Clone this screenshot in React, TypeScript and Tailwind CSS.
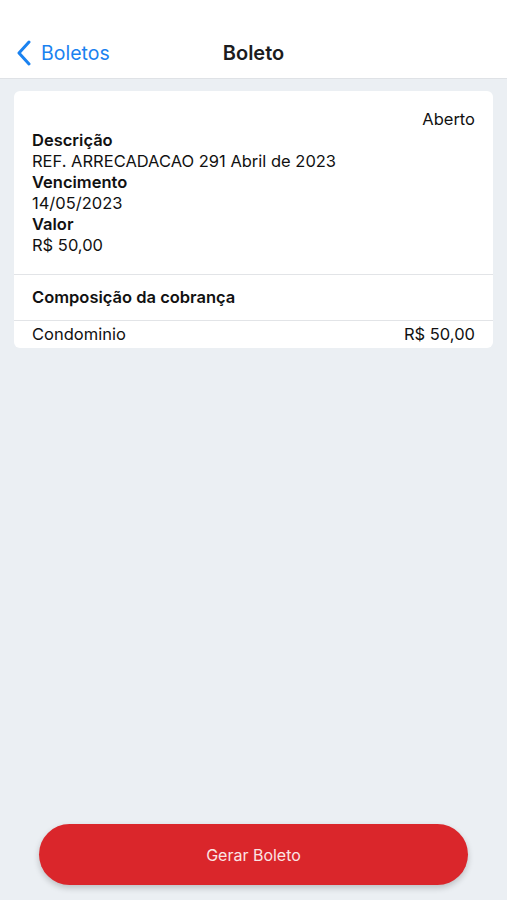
const font = { fontFamily: 'Inter, "Noto Sans", sans-serif' };

export default function App() {
  return (
    <div className="w-[507px] h-[900px] bg-[#ebeff3] flex flex-col text-[#111]" style={font}>
      <div className="h-[79px] bg-white border-b border-[#dfe2e6] flex items-end pb-[10px] relative">
        <div className="flex items-center pl-[16px] text-[#1a82f0]">
          <svg width="15" height="26" viewBox="0 0 15 26" fill="none">
            <path d="M13 2 L3 13 L13 24" stroke="currentColor" strokeWidth="3" strokeLinecap="round" strokeLinejoin="round" />
          </svg>
          <span className="text-[19.5px] ml-[10px]">Boletos</span>
        </div>
        <div className="absolute left-0 right-0 bottom-[10px] text-center text-[20px] font-semibold text-[#1c1c1e] pointer-events-none leading-[30px]">
          Boleto
        </div>
      </div>

      <div className="px-[14px] pt-[12px]">
        <div className="bg-white rounded-[6px] overflow-hidden">
          <div className="px-[18px] pt-[18px] pb-[18px] text-[16.5px] leading-[21px]">
            <div className="text-right">Aberto</div>
            <div className="font-semibold">Descrição</div>
            <div>REF. ARRECADACAO 291 Abril de 2023</div>
            <div className="font-semibold">Vencimento</div>
            <div>14/05/2023</div>
            <div className="font-semibold">Valor</div>
            <div>R$ 50,00</div>
          </div>
          <div className="border-t border-[#e2e4e7] px-[18px] h-[46px] flex items-center text-[16.5px] font-semibold">
            Composição da cobrança
          </div>
          <div className="border-t border-[#e2e4e7] px-[18px] h-[28px] flex items-center justify-between text-[16.5px]">
            <span>Condominio</span>
            <span>R$ 50,00</span>
          </div>
        </div>
      </div>

      <div className="flex-1" />

      <div className="px-[39px] pb-[15px]">
        <button className="w-full h-[61px] rounded-full bg-[#da262b] text-[#fbe4e4] text-[16px] shadow-[0_3px_6px_rgba(0,0,0,0.2)]">
          Gerar Boleto
        </button>
      </div>
    </div>
  );
}
